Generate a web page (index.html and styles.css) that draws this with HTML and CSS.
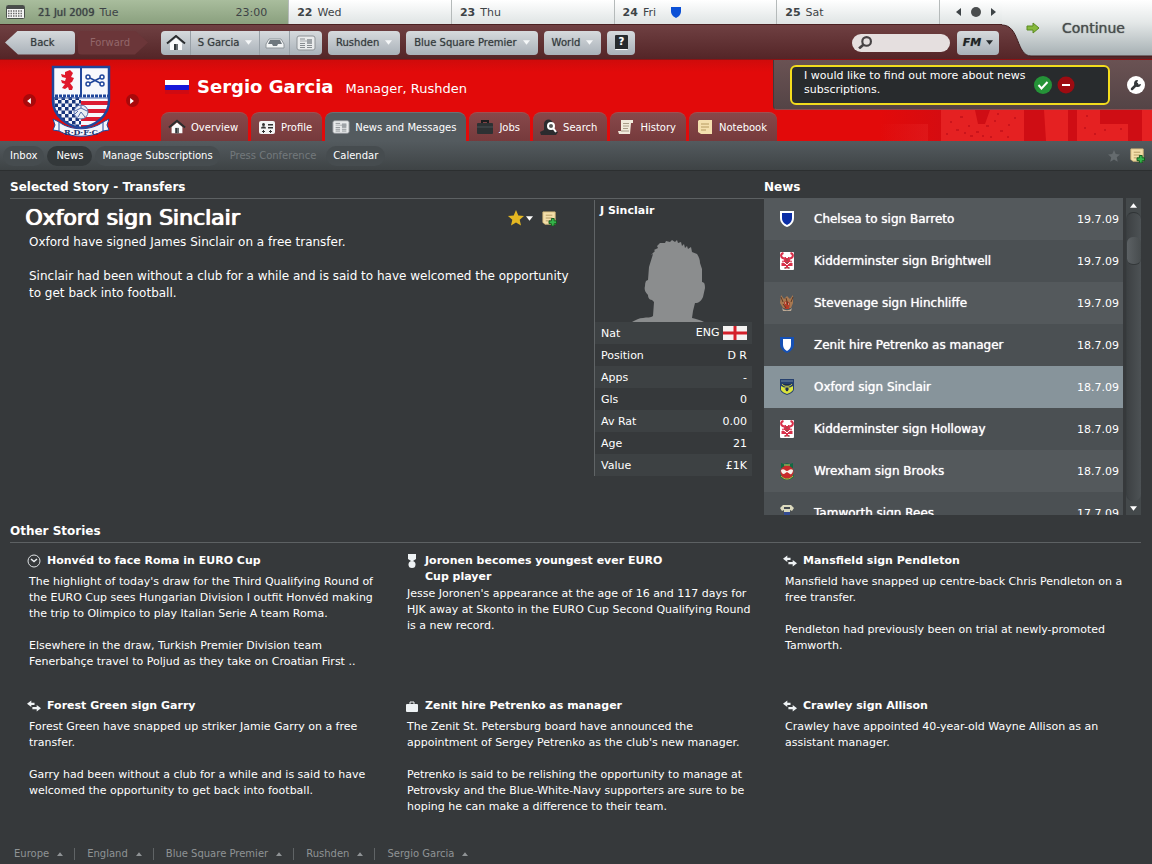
FILE: index.html
```html
<!DOCTYPE html>
<html lang="en">
<head>
  <meta charset="UTF-8">
  <meta name="viewport" content="width=device-width, initial-scale=1.0">
  <title>Sergio Garcia - News</title>
  <link rel="stylesheet" href="styles.css">
</head>
<body>
  <!-- shared icons -->
  <svg class="sprite" aria-hidden="true">
    <symbol id="i-down" viewBox="0 0 8 5"><path d="M0 0h8L4 5z" fill="currentColor"/></symbol>
    <symbol id="i-up" viewBox="0 0 8 5"><path d="M0 5h8L4 0z" fill="currentColor"/></symbol>
    <symbol id="i-left" viewBox="0 0 5 8"><path d="M5 0v8L0 4z" fill="currentColor"/></symbol>
    <symbol id="i-right" viewBox="0 0 5 8"><path d="M0 0v8l5-4z" fill="currentColor"/></symbol>
    <symbol id="i-home" viewBox="0 0 20 16">
      <path d="M4 8l6-5 6 5v7H4z" fill="#fbfbfb"/>
      <path d="M1 8.500L10 1l9 7.500" fill="none" stroke="#2b2d2f" stroke-width="2"/>
      <path d="M8 9h4v6H8z" fill="#33383b"/><path d="M10 9h2v6h-2z" fill="#6a6f72"/>
    </symbol>
    <symbol id="i-news" viewBox="0 0 20 16">
      <rect x="1" y="1" width="18" height="14" rx="2" fill="#e9ebec" stroke="#8d9296"/>
      <path d="M4 4h5M4 8.500h5M4 10.500h5M4 12.500h5M11 10.500h5M11 12.500h5" stroke="#878c90"/>
      <path d="M4 6h12" stroke="#a5a9ac"/><rect x="11" y="4" width="5" height="5" fill="#9ea3a7"/>
    </symbol>
    <symbol id="i-transfer" viewBox="0 0 13 10">
      <path d="M0 3l4-3v2h3v2H4v2z" fill="#eef2f4"/>
      <path d="M13 7l-4 3V8H5V6h4V4z" fill="#eef2f4"/>
    </symbol>
    <symbol id="i-note" viewBox="0 0 16 16">
      <path d="M1 1h13v13H3l-2-2z" fill="#f3deaa" stroke="#d9bd7d"/>
      <path d="M4 4.500h7M4 7.500h7M4 10.500h4" stroke="#b39a62"/>
      <path d="M10 8h3v2.500h2.500v3H13V16h-3v-2.500H7.500v-3H10z" fill="#35b44a" stroke="#11551d"/>
    </symbol>
    <symbol id="i-star" viewBox="0 0 16 16"><path d="M8 0l2.300 5.400 5.700.500-4.300 3.900 1.300 5.700-5-3-5 3 1.300-5.700L0 5.900l5.700-.500z" fill="currentColor"/></symbol>
    <symbol id="c-harriers" viewBox="0 0 14 18">
      <rect width="14" height="18" rx="1" fill="#fff"/>
      <path d="M3.500 1C0 2 .500 6 4 6.500M10.500 1C14 2 13.500 6 10 6.500" fill="none" stroke="#d9304a" stroke-width="2"/>
      <path d="M5 5l2 2 2-2 1 4-3 3-3-3zM2 9l2 1M12 9l-2 1M2 14v-3l3 1 2 2 2-2 3-1v3M5 16l2-2 2 2z" fill="#d9304a" stroke="#d9304a"/>
      <path d="M5 17v-2M9 17v-2M6 8h2M6 10.500h2" stroke="#7b5a4c"/>
    </symbol>
  </svg>

  <header class="topbar">
    <div class="topbar-left">
      <div class="dates">
        <div class="date today">
          <svg class="cal" viewBox="0 0 19 14" aria-hidden="true">
            <rect x="0.500" y="0.500" width="18" height="13" rx="1" fill="#f4f4f4" stroke="#4a524a"/>
            <rect x="1" y="1" width="17" height="3" fill="#4a4c4c"/>
            <path d="M2 6h15M2 8.500h15M2 11h15" stroke="#6d6d6d" stroke-width="1.500" stroke-dasharray="1.500 1"/>
          </svg>
          <b>21 Jul 2009</b><span>Tue</span><span class="time">23:00</span>
        </div>
        <div class="date"><b>22</b><span>Wed</span></div>
        <div class="date"><b>23</b><span>Thu</span></div>
        <div class="date"><b>24</b><span>Fri</span>
          <svg class="date-shield" viewBox="0 0 10 11" aria-hidden="true"><path d="M0 0h10v4c0 4-3 6-5 7-2-1-5-3-5-7z" fill="#0b50d6"/></svg>
        </div>
        <div class="date"><b>25</b><span>Sat</span></div>
        <div class="date-nav">
          <button aria-label="Previous day"><svg class="arrow-side"><use href="#i-left"/></svg></button>
          <button class="dot" aria-label="Today"></button>
          <button aria-label="Next day"><svg class="arrow-side"><use href="#i-right"/></svg></button>
        </div>
      </div>
      <nav class="toolbar">
        <button class="btn back">Back</button>
        <button class="btn forward" disabled>Forward</button>
        <div class="btn-group">
          <button class="btn" aria-label="Home"><svg class="icon"><use href="#i-home"/></svg></button>
          <button class="btn wide">S Garcia<svg class="arrow"><use href="#i-down"/></svg></button>
          <button class="btn" aria-label="Inbox"><svg class="icon" viewBox="0 0 20 16"><path d="M4 4h12l3 5v4H1V9z" fill="#f2f4f5" stroke="#8f969b"/><path d="M5 5h10l2 4h-4l-1 2H8L7 9H3z" fill="#6e777e"/></svg></button>
          <button class="btn" aria-label="News"><svg class="icon"><use href="#i-news"/></svg></button>
        </div>
        <button class="btn menu">Rushden<svg class="arrow"><use href="#i-down"/></svg></button>
        <button class="btn menu">Blue Square Premier<svg class="arrow"><use href="#i-down"/></svg></button>
        <button class="btn menu">World<svg class="arrow"><use href="#i-down"/></svg></button>
        <button class="btn help" aria-label="Help"><span>?</span></button>
        <label class="search">
          <svg viewBox="0 0 13 12" aria-label="Search"><circle cx="8" cy="5" r="4" fill="none" stroke="#464244" stroke-width="2"/><path d="M5 8l-4 3.500" stroke="#464244" stroke-width="2.500"/></svg>
          <input type="text" aria-label="Search">
        </label>
        <button class="btn fm">FM<svg class="arrow"><use href="#i-down"/></svg></button>
      </nav>
    </div>
    <button class="continue">
      <svg class="continue-bg" viewBox="0 0 150 60" preserveAspectRatio="none" aria-hidden="true">
        <defs><linearGradient id="silver" x1="0" y1="0" x2="0" y2="1"><stop offset="0" stop-color="#fff"/><stop offset="0.400" stop-color="#e4e8e8"/><stop offset="1" stop-color="#a5afb2"/></linearGradient></defs>
        <path d="M0 0h150v56H29C14 56 18 25 0 25z" fill="url(#silver)"/>
        <path d="M0 25C18 25 14 56 29 56h121" fill="none" stroke="#3d1a1b"/>
      </svg>
      <svg class="go" viewBox="0 0 14 12" aria-hidden="true"><path d="M1 4h6V1l6 5-6 5V8H1z" fill="#86b93c" stroke="#5b8a20"/></svg>
      <span>Continue</span>
    </button>
  </header>

  <section class="banner">
    <svg class="banner-art" viewBox="0 0 272 31" preserveAspectRatio="none" aria-hidden="true">
      <defs>
        <linearGradient id="fade"><stop offset="0" stop-color="#cf0d14" stop-opacity="0"/><stop offset="0.350" stop-color="#cf0d14"/></linearGradient>
        <linearGradient id="fade-light"><stop offset="0" stop-color="#e52122" stop-opacity="0"/><stop offset="1" stop-color="#e52122" stop-opacity="0.500"/></linearGradient>
      </defs>
      <rect width="272" height="31" fill="url(#fade)"/>
      <path d="M0 14h48v17H0z" fill="url(#fade-light)"/>
      <g fill="#e52122">
        <path d="M61 0h34l3 14h7l5-14h34v31H61z"/>
        <path d="M164 0h24v31h-22zM197 0h23v14h28v17h-51zM262 0h10v31h-10z"/>
      </g>
      <path d="M70 12h2M80 7h3M76 20h3M88 16h2M96 22h3M106 16h3M114 11h2M120 21h3M128 15h2M134 8h2M90 26h3M110 27h2M66 24h2M84 23h2M102 26h2M127 27h2M117 4h2M204 18h2M214 24h2M224 20h2M240 19h2M206 6h2" stroke="#c4101a" stroke-width="1.500"/>
    </svg>
    <div class="crest">
      <button class="round" aria-label="Previous"><svg><use href="#i-left"/></svg></button>
      <svg class="crest-img" viewBox="0 0 60 72" role="img" aria-label="Rushden">
        <defs>
          <clipPath id="shield"><path d="M2 2h56v34c0 15-14 25-28 27C16 61 2 51 2 36z"/></clipPath>
          <pattern id="checks" width="7" height="7" patternUnits="userSpaceOnUse"><rect width="7" height="7" fill="#f4f5fb"/><path d="M0 0h3.500v3.500H0zM3.500 3.500H7V7H3.500z" fill="#17347c"/></pattern>
        </defs>
        <g clip-path="url(#shield)">
          <rect width="60" height="72" fill="#f7f8fc"/>
          <rect y="32" width="30" height="36" fill="url(#checks)"/>
          <path d="M30 38h30M30 46h30M30 54h30M30 62h30" stroke="#dc1b32" stroke-width="4"/>
          <path d="M30 0v32" stroke="#20469b" stroke-width="2"/>
          <path d="M0 31h60" stroke="#20469b" stroke-width="3" stroke-dasharray="3 1"/>
          <path d="M0 33h60" stroke="#4b69ae"/>
        </g>
        <path d="M2 2h56v34c0 15-14 25-28 27C16 61 2 51 2 36z" fill="none" stroke="#20469b" stroke-width="2.500"/>
        <path d="M14 7l5-2 3 3-2 4 3 1-2 4-2 1 3 4-1 3h-3l-1-3-3 2-3-1 3-4-3-1-1-3 4 1 1-3-4-1-1-3 4 1z" fill="#e0182b"/>
        <g fill="none" stroke="#20469b" stroke-width="1.500"><circle cx="37" cy="12" r="2"/><circle cx="51" cy="12" r="2"/><circle cx="37" cy="19" r="2"/><circle cx="51" cy="19" r="2"/><path d="M39 13l10 5M49 13l-10 5"/></g>
        <circle cx="30" cy="47" r="7" fill="#e9edf6" stroke="#526aa8"/>
        <path d="M24 46l6-3 6 3M30 43v-3M27 52l3-5 4 5M24 49l3-3" fill="none" stroke="#526aa8"/>
        <path d="M2 54l6 3c12 9 32 9 44 0l6-3-2 6 2 5-6 1c-12 7-32 7-44 0l-6-1 2-5z" fill="#f3f4fa" stroke="#20469b"/>
        <path d="M8 57v9M52 57v9" stroke="#20469b"/>
        <text x="30" y="70" text-anchor="middle" class="crest-text">R·D·F·C</text>
      </svg>
      <button class="round" aria-label="Next"><svg><use href="#i-right"/></svg></button>
    </div>
    <div class="person">
      <div class="name-row">
        <svg class="flag" viewBox="0 0 24 14" role="img" aria-label="Flag"><rect width="24" height="14" fill="#d00a12"/><rect width="24" height="10" fill="#1717d8"/><rect width="24" height="5" fill="#fff"/></svg>
        <h1>Sergio Garcia</h1>
        <span class="role">Manager, Rushden</span>
      </div>
      <nav class="tabs">
        <a href="#" class="tab"><svg class="tab-icon"><use href="#i-home"/></svg>Overview</a>
        <a href="#" class="tab"><svg class="tab-icon" viewBox="0 0 18 16"><rect x="1" y="2" width="16" height="13" rx="2" fill="#f3f3f3"/><circle cx="5.500" cy="5.500" r="1.500" fill="#333"/><path d="M3 9.500c0-3 5-3 5 0zM10 5h5v1.500h-5zM10 8h5v1.500h-5zM4 12h3v1H4zM5 11h1v3H5zM11 12h3v1h-3zM12 11h1v3h-1z" fill="#333"/></svg>Profile</a>
        <a href="#" class="tab active"><svg class="tab-icon"><use href="#i-news"/></svg>News and Messages</a>
        <a href="#" class="tab"><svg class="tab-icon" viewBox="0 0 18 16"><path d="M6 4V2h6v2" fill="none" stroke="#1c1d1f" stroke-width="2"/><rect x="1" y="4" width="16" height="11" rx="1" fill="#2d3133"/><path d="M1 8h16" stroke="#4b5154"/></svg>Jobs</a>
        <a href="#" class="tab"><svg class="tab-icon" viewBox="0 0 18 16"><path d="M4 5c0-6 9-6 9 0v5l5 3-2 3H1l-1-3 4-2z" fill="#2b2b2e"/><circle cx="11" cy="7" r="3" fill="#555" stroke="#fff" stroke-width="2"/><path d="M13 9l3 4" stroke="#fff" stroke-width="2"/></svg>Search</a>
        <a href="#" class="tab"><svg class="tab-icon" viewBox="0 0 18 16"><path d="M4 1h12v3h-2l-1 11H2l-1-3h3z" fill="#f1eadc"/><path d="M6 4.500h6M6 7h6M6 9.500h5M4 12h8" stroke="#a89c88"/></svg>History</a>
        <a href="#" class="tab"><svg class="tab-icon" viewBox="0 0 18 16"><path d="M3 1h13v14H5l-3-2V2z" fill="#f4dfae"/><path d="M5 5h8M5 8h8M5 11h5" stroke="#b69a60"/></svg>Notebook</a>
      </nav>
    </div>
    <aside class="notice">
      <div class="notice-box">
        <p>I would like to find out more about news subscriptions.</p>
        <button aria-label="Yes"><svg viewBox="0 0 18 18"><circle cx="9" cy="9" r="9" fill="#259338"/><path d="M4.500 9l3 3.500L13.500 6" fill="none" stroke="#fff" stroke-width="2"/></svg></button>
        <button aria-label="No"><svg viewBox="0 0 18 18"><circle cx="9" cy="9" r="8.500" fill="#9d0b11"/><path d="M5 9h8" stroke="#fff" stroke-width="2"/></svg></button>
      </div>
      <button class="wrench" aria-label="Preferences"><svg viewBox="0 0 18 18"><circle cx="9" cy="9" r="9" fill="#fff"/><path d="M5 13l5-5" stroke="#34393b" stroke-width="2.500" stroke-linecap="round"/><path d="M11 4a3.500 3.500 0 1 0 3 4l-2.500.500L10 7z" fill="#34393b"/></svg></button>
    </aside>
  </section>

  <nav class="subnav">
    <a href="#">Inbox</a>
    <a href="#" class="current">News</a>
    <a href="#">Manage Subscriptions</a>
    <a class="off">Press Conference</a>
    <a href="#">Calendar</a>
    <div class="subnav-tools">
      <button aria-label="Bookmark"><svg class="star-dim"><use href="#i-star"/></svg></button>
      <button aria-label="Add note"><svg class="note"><use href="#i-note"/></svg></button>
    </div>
  </nav>

  <main>
    <div class="upper">
      <section class="selected">
        <h2>Selected Story - Transfers</h2>
        <div class="selected-body">
          <article class="story-main">
            <div class="story-head">
              <h3>Oxford sign Sinclair</h3>
              <div class="story-tools">
                <button aria-label="Favourite"><svg class="star"><use href="#i-star"/></svg><svg class="arrow"><use href="#i-down"/></svg></button>
                <button aria-label="Add note"><svg class="note"><use href="#i-note"/></svg></button>
              </div>
            </div>
            <p>Oxford have signed James Sinclair on a free transfer.</p>
            <p>Sinclair had been without a club for a while and is said to have welcomed the opportunity to get back into football.</p>
          </article>
          <div class="player">
            <h4>J Sinclair</h4>
            <svg class="face" viewBox="0 0 74 82" role="img" aria-label="No photo">
              <path d="M0 82C4 80 7 78 11 78C15 77 19 78 21 76L22 62L20 60C17 60 16 57 16 55C13 52 12 49 13 46C13 42 14 40 16 40L17 27L21 14L19 15L23 11L22 10L26 8L25 6L28 3L33 3L34 1L38 2L40 0L43 2L45 0L46 3L49 2L50 6L52 4L53 8L55 6L56 9L59 7L60 12L65 14C67 17 68 20 68 23L70 29L70 42C73 42 73 46 73 48L71 57C69 61 67 63 63 63L61 71L60 78C64 79 69 80 72 82z" fill="#8b8d8e"/>
            </svg>
            <table>
              <tr><th>Nat</th><td>ENG <svg class="flag" viewBox="0 0 24 14" aria-hidden="true"><rect width="24" height="14" fill="#f5f3f2"/><path d="M12 0v14M0 7h24" stroke="#d4202a" stroke-width="3"/></svg></td></tr>
              <tr><th>Position</th><td>D R</td></tr>
              <tr><th>Apps</th><td>-</td></tr>
              <tr><th>Gls</th><td>0</td></tr>
              <tr><th>Av Rat</th><td>0.00</td></tr>
              <tr><th>Age</th><td>21</td></tr>
              <tr><th>Value</th><td>£1K</td></tr>
            </table>
          </div>
        </div>
      </section>

      <section class="news">
        <h2>News</h2>
        <div class="news-wrap">
          <ul>
            <li><a href="#"><svg class="badge" viewBox="0 0 16 18"><path d="M1 1h14v7c0 5-4 8-7 9-3-1-7-4-7-9z" fill="#fff"/><path d="M3 3h10v5c0 4-3 6-5 7-2-1-5-3-5-7z" fill="#0b2ea6"/></svg><span>Chelsea to sign Barreto</span><time>19.7.09</time></a></li>
            <li><a href="#"><svg class="badge"><use href="#c-harriers"/></svg><span>Kidderminster sign Brightwell</span><time>19.7.09</time></a></li>
            <li><a href="#"><svg class="badge" viewBox="0 0 16 18"><path d="M2 1l3 4 3-3 3 3 3-4v8l-2 5H4L1 9z" fill="#a87850"/><path d="M5 8l3-1 3 2-1 6H6z" fill="#b43c28"/><path d="M2 3l2 5M14 3l-2 5M7 4l2 7M4 10l3 4" stroke="#5b3826"/><path d="M3 14c3 3 7 3 10 0l-1 3H4z" fill="#bda994"/><path d="M6 9h1M9 10h1" stroke="#ecdcc0"/></svg><span>Stevenage sign Hinchliffe</span><time>19.7.09</time></a></li>
            <li><a href="#"><svg class="badge" viewBox="0 0 16 18"><path d="M1 1h14v7c0 5-4 8-7 9-3-1-7-4-7-9z" fill="#1550b4"/><path d="M4 3h8v6c0 3-2 5-4 6-2-1-4-3-4-6z" fill="#fff"/></svg><span>Zenit hire Petrenko as manager</span><time>18.7.09</time></a></li>
            <li class="selected-row"><a href="#"><svg class="badge" viewBox="0 0 16 18"><path d="M1 1h14v10c0 3-4 5-7 6-3-1-7-3-7-6z" fill="#26406e"/><path d="M2 8l4 2 1 3h2l1-3 4-2v4c-1 2-4 3-6 4-2-1-5-2-6-4z" fill="#dbe43c"/><path d="M2 3h12" stroke="#71869f"/><path d="M3 6c2 3 8 3 10 0M6 9h4v3l-2 2-2-2z" fill="#1b2b4e" stroke="#bfc64a"/></svg><span>Oxford sign Sinclair</span><time>18.7.09</time></a></li>
            <li><a href="#"><svg class="badge"><use href="#c-harriers"/></svg><span>Kidderminster sign Holloway</span><time>18.7.09</time></a></li>
            <li><a href="#"><svg class="badge" viewBox="0 0 16 18"><path d="M2 1l3 1 3-1 3 1 3-1v5H2z" fill="#126a43"/><circle cx="8" cy="10" r="6.500" fill="#c82b2b"/><path d="M2 8c3-2 4 1 6 1s3-3 6-1c0 3-2 5-3 4L8 10l-3 2c-2 0-3-2-3-4z" fill="#f7f1ea"/><path d="M1 12c3 6 11 6 14 0v3c-4 4-10 4-14 0z" fill="#247344"/><path d="M2 14c4 4 8 4 12 0" fill="none" stroke="#d5a935"/><path d="M5 3h6" stroke="#d5c95f"/></svg><span>Wrexham sign Brooks</span><time>18.7.09</time></a></li>
            <li><a href="#"><svg class="badge" viewBox="0 0 16 18"><path d="M4 1h8l3 3-2 3-2-1v7l-3 3-3-3V6L3 7 1 4z" fill="#dcdabe"/><path d="M5 3h6v2H5z" fill="#454b50"/><path d="M5 8h6v5l-3 2-3-2z" fill="#344b92"/></svg><span>Tamworth sign Rees</span><time>17.7.09</time></a></li>
          </ul>
          <div class="scroll">
            <button aria-label="Scroll up"><svg class="arrow"><use href="#i-up"/></svg></button>
            <div class="track"><div class="thumb"></div></div>
            <button aria-label="Scroll down"><svg class="arrow"><use href="#i-down"/></svg></button>
          </div>
        </div>
      </section>
    </div>

    <section class="others">
      <h2>Other Stories</h2>
      <div class="story-grid">
        <article>
          <h3><svg viewBox="0 0 14 14"><circle cx="7" cy="7" r="6" fill="none" stroke="#dfe3e5"/><path d="M4 5l3 2.500L10 5" fill="none" stroke="#eef2f4" stroke-width="1.500"/></svg><span>Honvéd to face Roma in EURO Cup</span></h3>
          <p>The highlight of today's draw for the Third Qualifying Round of the EURO Cup sees Hungarian Division I outfit Honvéd making the trip to Olimpico to play Italian Serie A team Roma.</p>
          <p>Elsewhere in the draw, Turkish Premier Division team Fenerbahçe travel to Poljud as they take on Croatian First ..</p>
        </article>
        <article>
          <h3><svg viewBox="0 0 14 14"><path d="M3 0h8v5L8 7H6L3 5z" fill="#eef2f4"/><circle cx="7" cy="10.500" r="3.500" fill="#eef2f4"/></svg><span>Joronen becomes youngest ever EURO Cup player</span></h3>
          <p>Jesse Joronen's appearance at the age of 16 and 117 days for HJK away at Skonto in the EURO Cup Second Qualifying Round is a new record.</p>
        </article>
        <article>
          <h3><svg><use href="#i-transfer"/></svg><span>Mansfield sign Pendleton</span></h3>
          <p>Mansfield have snapped up centre-back Chris Pendleton on a free transfer.</p>
          <p>Pendleton had previously been on trial at newly-promoted Tamworth.</p>
        </article>
        <article>
          <h3><svg><use href="#i-transfer"/></svg><span>Forest Green sign Garry</span></h3>
          <p>Forest Green have snapped up striker Jamie Garry on a free transfer.</p>
          <p>Garry had been without a club for a while and is said to have welcomed the opportunity to get back into football.</p>
        </article>
        <article>
          <h3><svg viewBox="0 0 14 14"><rect x="1" y="5" width="12" height="8" rx="1" fill="#eef2f4"/><path d="M5 5V3h4v2" fill="none" stroke="#eef2f4"/></svg><span>Zenit hire Petrenko as manager</span></h3>
          <p>The Zenit St. Petersburg board have announced the appointment of Sergey Petrenko as the club's new manager.</p>
          <p>Petrenko is said to be relishing the opportunity to manage at Petrovsky and the Blue-White-Navy supporters are sure to be hoping he can make a difference to their team.</p>
        </article>
        <article>
          <h3><svg><use href="#i-transfer"/></svg><span>Crawley sign Allison</span></h3>
          <p>Crawley have appointed 40-year-old Wayne Allison as an assistant manager.</p>
        </article>
      </div>
    </section>
  </main>

  <footer>
    <button>Europe<svg><use href="#i-up"/></svg></button>
    <button>England<svg><use href="#i-up"/></svg></button>
    <button>Blue Square Premier<svg><use href="#i-up"/></svg></button>
    <button>Rushden<svg><use href="#i-up"/></svg></button>
    <button>Sergio Garcia<svg><use href="#i-up"/></svg></button>
  </footer>
</body>
</html>
```
FILE: styles.css
```css
* {
  box-sizing: border-box;
}
body {
  margin: 0;
  min-height: 100vh;
  display: flex;
  flex-direction: column;
  background: #36393b;
  color: #fff;
  font-family: 'DejaVu Sans', sans-serif;
  font-size: 11px;
}
h1, h2, h3, h4, p, ul {
  margin: 0;
  padding: 0;
}
button {
  font-family: inherit;
  font-size: inherit;
  color: inherit;
  background: none;
  border: none;
  padding: 0;
}
a {
  color: inherit;
  text-decoration: none;
}
svg {
  flex: none;
}
.sprite {
  position: absolute;
  width: 0;
  height: 0;
}
.arrow {
  width: 7px;
  height: 5px;
}
.arrow-side {
  width: 5px;
  height: 8px;
}
.flag {
  width: 24px;
  height: 14px;
}

/* Top bar: dates, toolbar and continue */
.topbar {
  display: grid;
  grid-template-columns: 1fr 150px;
  height: 60px;
  background: linear-gradient(#6f4042 25px, #542527);
  border-bottom: 1px solid #8c1214;
}
.dates {
  display: grid;
  grid-template-columns: 16fr 9fr 9fr 9fr 9fr 62px;
  height: 25px;
  border-bottom: 1px solid #4a2021;
  background: linear-gradient(#fff, #dfe4e4);
  color: #3d4346;
}
.date {
  display: flex;
  align-items: center;
  gap: 5px;
  padding: 0 8px;
  border-right: 1px solid #b5baba;
}
.today {
  background: linear-gradient(#a9bd9d, #8aa07e);
  gap: 5px;
  padding: 0 21px 0 6px;
}
.today b {
  font-size: 10px;
  font-weight: normal;
  text-shadow: 0 0 1px #3d4346;
}
.cal {
  width: 19px;
  height: 14px;
  margin-right: 8px;
}
.time {
  margin-left: auto;
}
.date-shield {
  width: 10px;
  height: 11px;
  margin-left: 10px;
}
.date-nav {
  display: flex;
  align-items: center;
  justify-content: center;
  gap: 10px;
  padding-left: 10px;
}
.date-nav button {
  display: flex;
}
.date-nav .dot {
  width: 10px;
  height: 10px;
  border-radius: 50%;
  background: #4a4d4e;
}
.toolbar {
  display: flex;
  align-items: center;
  height: 35px;
  padding: 0 3px 0 5px;
}
.btn {
  height: 24px;
  padding: 0 6px;
  display: flex;
  align-items: center;
  justify-content: center;
  gap: 6px;
  border-radius: 4px;
  background: linear-gradient(#d6dadd, #a9b1b9);
  color: #34393c;
  font-size: 10px;
  white-space: nowrap;
  text-shadow: 0 0 1px #6b7276;
}
.btn .arrow {
  color: #f5f7f8;
}
.back, .forward {
  width: 70px;
  margin-right: 3px;
}
.back {
  clip-path: polygon(13px 0, 100% 0, 100% 100%, 13px 100%, 0 50%);
  padding-left: 11px;
}
.forward {
  background: #6b3639;
  color: #93676a;
  text-shadow: none;
  clip-path: polygon(0 0, 57px 0, 100% 50%, 57px 100%, 0 100%);
  padding-right: 12px;
}
.btn-group {
  display: flex;
  margin: 0 6px 0 10px;
  border-radius: 4px;
  overflow: hidden;
}
.btn-group .btn {
  width: 30px;
  border-radius: 0;
  border-right: 1px solid #98a0a7;
}
.btn-group .wide {
  width: 69px;
}
.btn-group .btn:last-child {
  width: 32px;
  border-right: none;
}
.icon {
  width: 20px;
  height: 16px;
}
.menu {
  padding: 0 8px;
  margin-right: 6px;
}
.help {
  width: 28px;
}
.help span {
  width: 13px;
  height: 15px;
  background: #272b2e;
  border-bottom: 1px solid #fff;
  border-radius: 1px;
  color: #fff;
  font-weight: bold;
  line-height: 14px;
}
.search {
  display: flex;
  align-items: center;
  width: 98px;
  height: 18px;
  margin: 0 7px 0 auto;
  padding: 0 6px;
  border-radius: 9px;
  background: #e5dfdf;
}
.search svg {
  width: 14px;
  height: 13px;
}
.search input {
  width: 100%;
  min-width: 0;
  border: none;
  background: none;
  font-size: 10px;
  outline: none;
}
.fm {
  width: 42px;
  gap: 5px;
  font-weight: bold;
  font-style: italic;
  font-size: 11px;
  color: #1f2325;
}
.fm .arrow {
  color: #272b2e;
}
.continue {
  position: relative;
  display: flex;
  align-items: center;
  gap: 22px;
  padding: 0 0 4px 24px;
  color: #494d4e;
  font-size: 14px;
  text-shadow: 0 0 1px #494d4e;
}
.continue-bg {
  position: absolute;
  inset: 0;
  width: 100%;
  height: 100%;
}
.continue span, .go {
  position: relative;
}
.go {
  width: 14px;
  height: 12px;
}

/* Red club banner */
.banner {
  position: relative;
  display: flex;
  height: 81px;
  background: linear-gradient(#d00b0b, #e20a0a 12px);
}
.banner-art {
  position: absolute;
  right: 0;
  bottom: 0;
  width: 272px;
  height: 31px;
}
.crest {
  display: flex;
  width: 161px;
  align-items: center;
  justify-content: center;
  gap: 15px;
}
.crest-img {
  width: 60px;
  height: 72px;
}
.crest-text {
  font: bold 8px 'DejaVu Serif', serif;
  fill: #20346e;
}
.round {
  display: flex;
  align-items: center;
  justify-content: center;
  width: 13px;
  height: 13px;
  border-radius: 50%;
  background: #a8090b;
}
.round svg {
  width: 4px;
  height: 6px;
}
.person {
  display: flex;
  flex-direction: column;
  justify-content: space-between;
}
.name-row {
  display: flex;
  align-items: center;
  gap: 8px;
  padding: 15px 0 0 4px;
}
.name-row h1 {
  font-size: 18px;
  line-height: 24px;
  margin-right: 4px;
}
.role {
  font-size: 13px;
  padding-top: 3px;
}
.tabs {
  display: flex;
  gap: 3px;
}
.tab {
  display: flex;
  align-items: center;
  gap: 5px;
  height: 29px;
  padding: 0 10px 0 7px;
  border-radius: 8px 8px 0 0;
  background: linear-gradient(#87484a, #763a3c);
  border-top: 1px solid #a04f51;
  font-size: 10px;
  white-space: nowrap;
}
.tab.active {
  background: #545b5f;
  border-top-color: #6a7174;
}
.tab-icon {
  width: 18px;
  height: 16px;
}
.notice {
  position: absolute;
  top: 0;
  right: 0;
  display: flex;
  align-items: center;
  gap: 17px;
  width: 379px;
  height: 50px;
  padding: 0 7px 0 16px;
  border-left: 1px solid #41393b;
  border-bottom: 1px solid #8f4a4b;
  border-radius: 0 0 0 4px;
  background: linear-gradient(#6a5253, #544446);
}
.notice-box {
  display: flex;
  align-items: center;
  gap: 5px;
  flex: 1;
  height: 40px;
  padding: 0 33px 0 12px;
  border: 2px solid #f3dc1d;
  border-radius: 6px;
  background: #282b2d;
}
.notice-box p {
  flex: 1;
  line-height: 14px;
  padding-bottom: 4px;
}
.notice svg {
  display: block;
  width: 18px;
  height: 18px;
}

/* Second level navigation */
.subnav {
  display: flex;
  align-items: center;
  gap: 3px;
  height: 30px;
  padding: 0 7px 0 3px;
  background: linear-gradient(#545b5f, #3e4345);
  border-bottom: 1px solid #2c2f30;
  font-size: 10px;
}
.subnav a {
  padding: 0 7px;
  line-height: 20px;
  border-radius: 10px;
  background: #464c4f;
}
.subnav .current {
  padding: 0 9px;
  background: #33383a;
}
.subnav .off {
  background: none;
  color: #73797c;
}
.subnav-tools {
  display: flex;
  align-items: center;
  gap: 10px;
  margin-left: auto;
}
.subnav-tools button {
  display: flex;
}
.star-dim {
  width: 12px;
  height: 12px;
  color: #656b6e;
}
.note {
  width: 15px;
  height: 15px;
}

main {
  padding: 0 11px 0 10px;
}
h2 {
  height: 28px;
  line-height: 32px;
  font-size: 12px;
  border-bottom: 1px solid #5d6163;
}
.upper {
  display: grid;
  grid-template-columns: 2fr 1fr;
}
.selected-body {
  display: flex;
}
.story-main {
  flex: 1;
  padding: 7px 17px 0 19px;
  font-size: 12px;
  line-height: 17px;
}
.story-main p {
  margin-bottom: 17px;
}
.story-head {
  display: flex;
  align-items: center;
  justify-content: space-between;
  height: 28px;
  margin-left: -4px;
  padding: 0 20px 4px 0;
}
.story-head h3 {
  font-size: 22px;
  line-height: 26px;
  font-weight: normal;
  text-shadow: 0 0 1px #fff, 1px 0 0 #fff;
}
.story-tools {
  display: flex;
  align-items: center;
  gap: 9px;
}
.story-tools button {
  display: flex;
  align-items: center;
  gap: 2px;
}
.star {
  width: 16px;
  height: 16px;
  color: #e5b822;
}
.player {
  width: 158px;
  margin: 1px 12px 0 0;
  border-left: 1px solid #606466;
}
.player h4 {
  padding: 4px 5px;
  line-height: 14px;
  font-size: 11px;
}
.face {
  display: block;
  width: 74px;
  height: 82px;
  margin: 18px auto 0 37px;
}
.player table {
  width: 100%;
  border-collapse: collapse;
}
.player tr:nth-child(odd) {
  background: #3d4143;
}
.player th, .player td {
  height: 22px;
  padding: 0 5px 0 6px;
  font-weight: normal;
  text-align: left;
}
.player td {
  text-align: right;
}
.player td .flag {
  vertical-align: middle;
}

/* News list */
.news h2 {
  height: 27px;
  border-bottom: none;
}
.news-wrap {
  display: flex;
  height: 317px;
}
.news ul {
  flex: 1;
  overflow: hidden;
  list-style: none;
}
.news li {
  background: #4b5053;
}
.news li:nth-child(odd) {
  background: #54595c;
}
.news li.selected-row {
  background: #87949b;
}
.news a {
  display: flex;
  align-items: center;
  height: 42px;
  padding: 0 4px 0 15px;
}
.badge {
  width: 16px;
  height: 18px;
  margin-right: 19px;
}
.news span {
  flex: 1;
  font-size: 12px;
  text-shadow: 0 0 1px #fff;
}
.scroll {
  display: flex;
  flex-direction: column;
  width: 15px;
  margin-left: 3px;
  background: #44494b;
}
.scroll button {
  display: flex;
  align-items: center;
  justify-content: center;
  height: 14px;
}
.track {
  flex: 1;
  border-radius: 7px;
  border-top: 1px solid #303436;
  border-left: 1px solid #393e40;
  background: linear-gradient(90deg, #3d4143, #4d5255);
}
.thumb {
  height: 28px;
  margin-top: 24px;
  border-radius: 6px;
  border-bottom: 1px solid #34383a;
  background: linear-gradient(90deg, #5c6164, #474c4e);
}

/* Other stories */
.story-grid {
  display: grid;
  grid-template-columns: repeat(3, 1fr);
  grid-auto-rows: minmax(145px, auto);
  margin-right: -3px;
  padding-top: 10px;
}
.story-grid article {
  padding: 0 13px 0 19px;
  line-height: 16px;
}
.story-grid h3 {
  display: flex;
  min-height: 20px;
  margin-bottom: 1px;
  font-size: 11px;
}
.story-grid h3 svg {
  width: 14px;
  height: 14px;
  margin: 1px 6px 0 -2px;
}
.story-grid h3 span {
  max-width: 260px;
}
.story-grid p {
  margin-bottom: 16px;
}

footer {
  display: flex;
  align-items: center;
  height: 22px;
  margin-top: auto;
  padding: 0 2px;
  color: #8f9395;
  font-size: 10px;
}
footer button {
  display: flex;
  align-items: center;
  gap: 8px;
  line-height: 12px;
  padding: 0 11px 0 12px;
  border-right: 1px solid #606466;
}
footer button:last-child {
  border-right: none;
}
footer svg {
  width: 6px;
  height: 4px;
}
```
